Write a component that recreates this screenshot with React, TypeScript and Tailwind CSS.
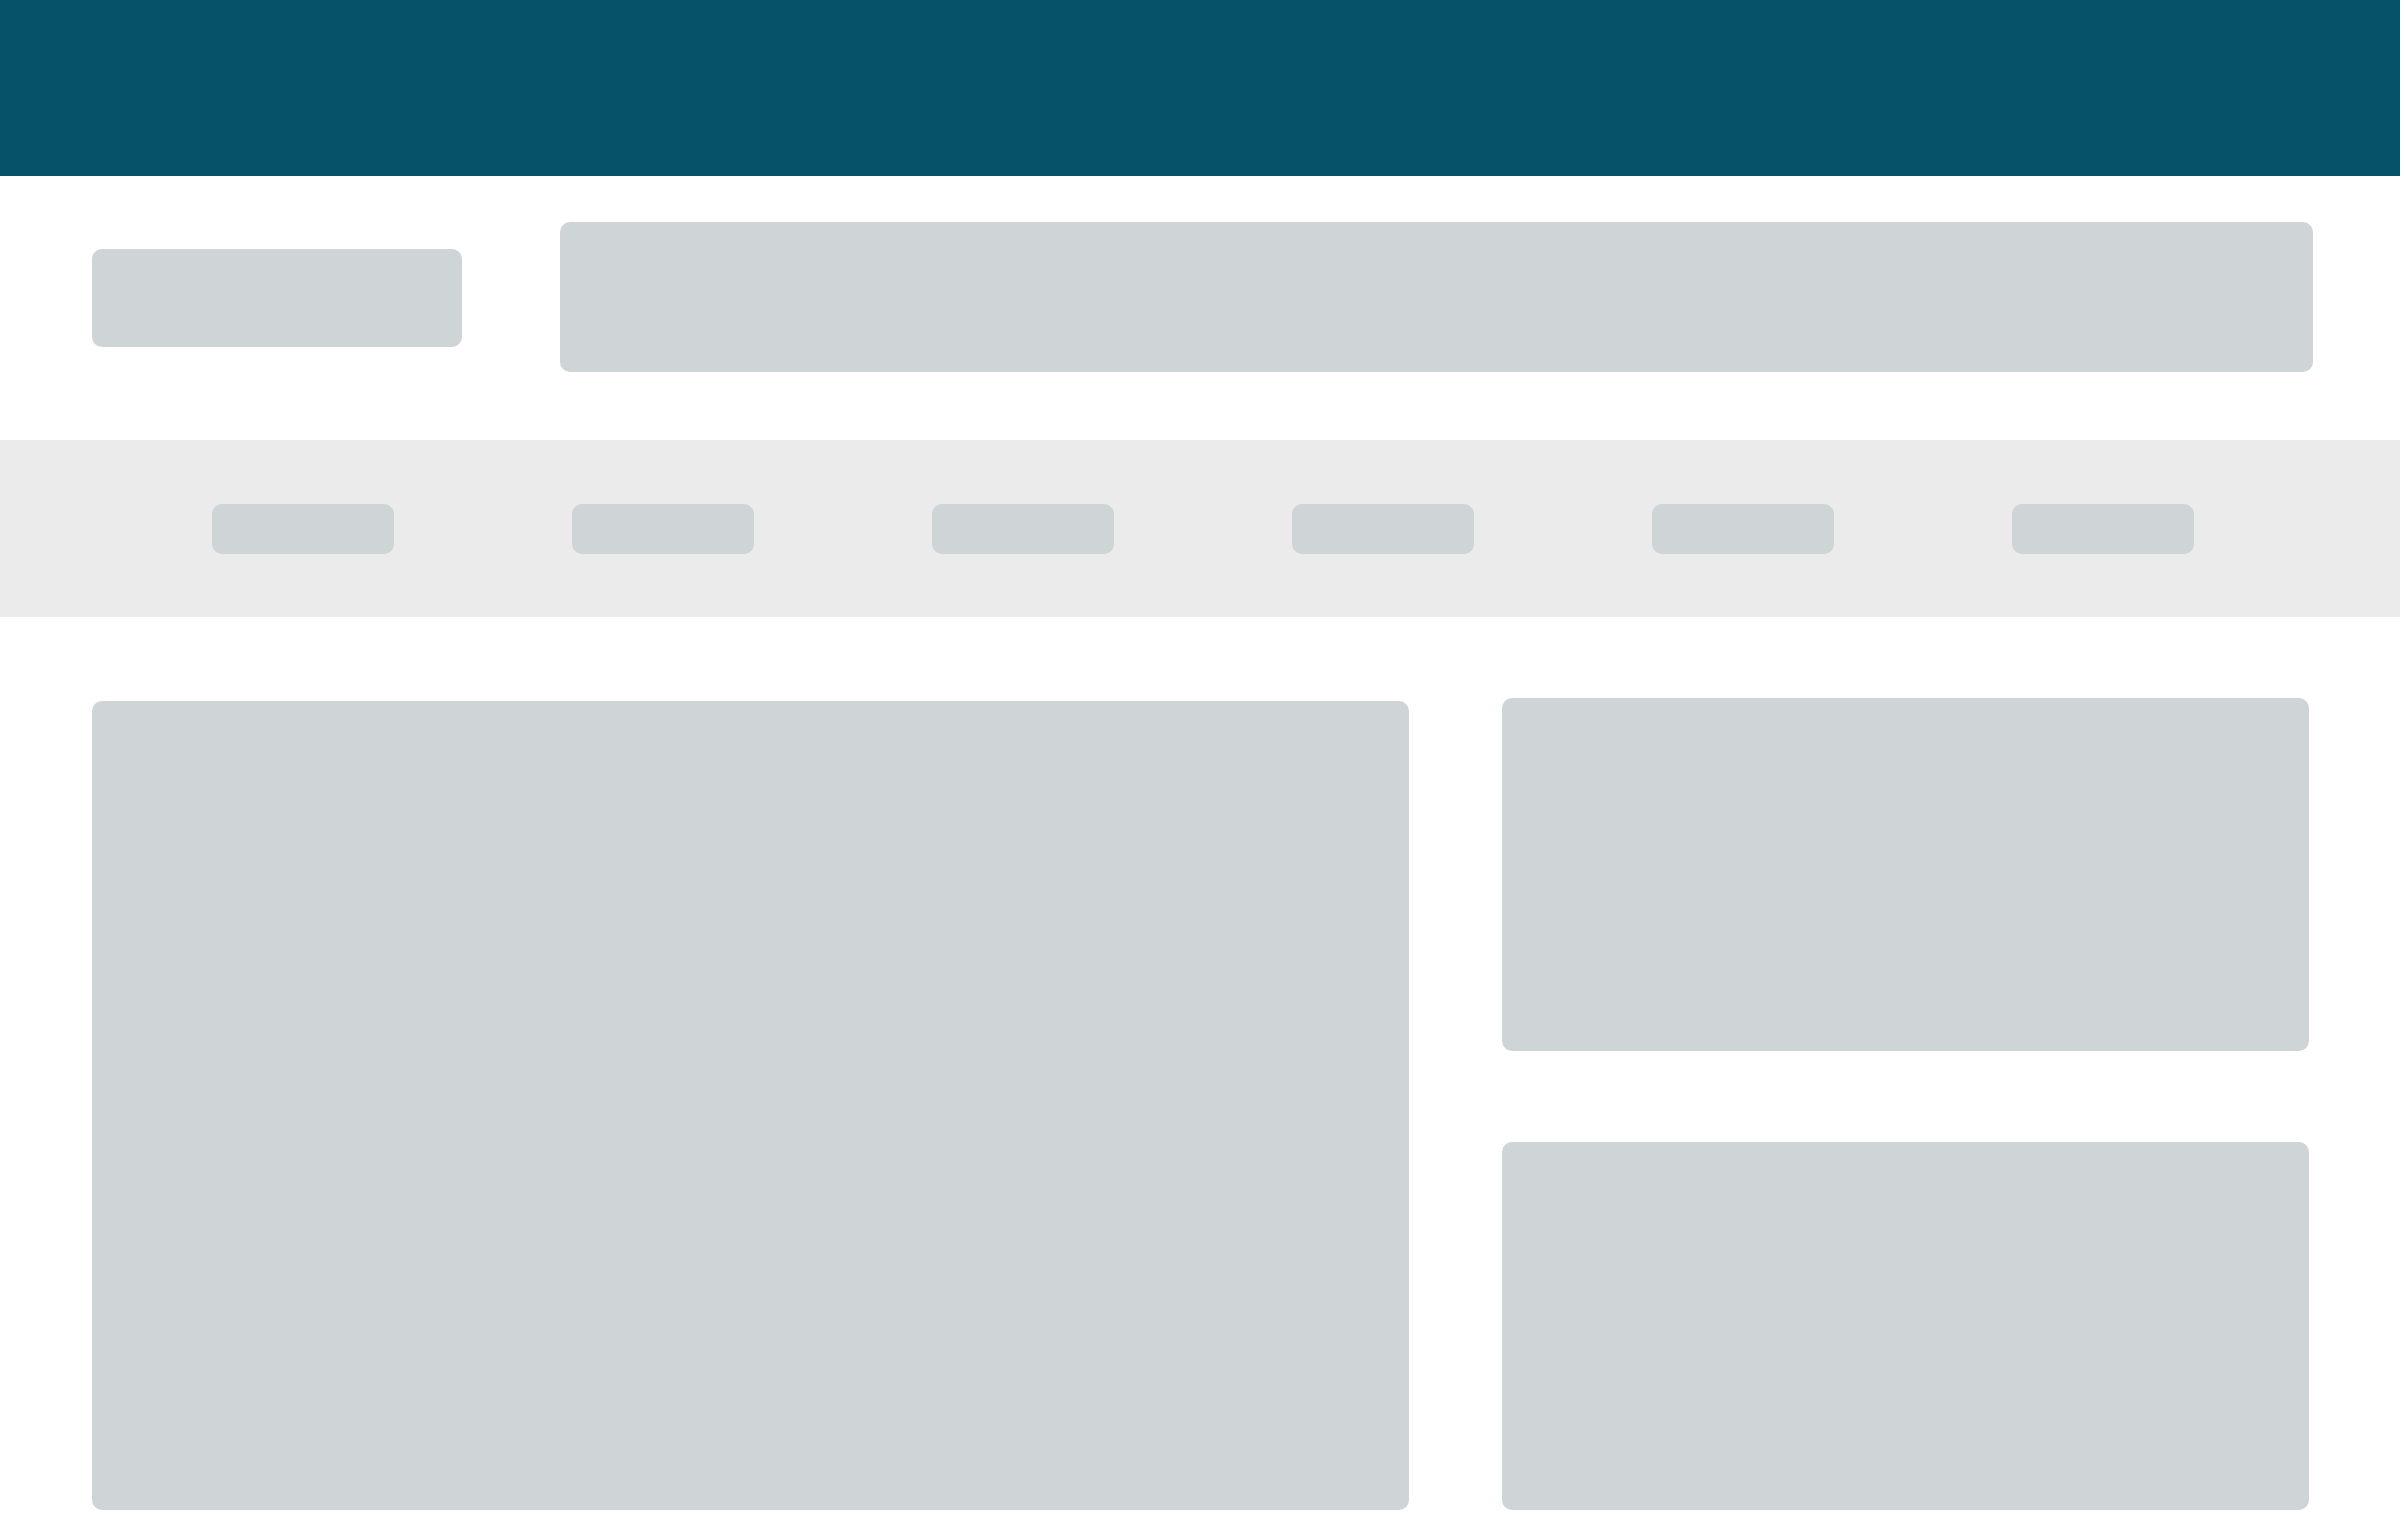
export default function App() {
  const pills = [0, 1, 2, 3, 4, 5];
  return (
    <div className="w-[2400px] h-[1518px] bg-white overflow-hidden">
      <header className="h-[176px] bg-[#065269]" />
      <div className="flex items-start pl-[92px] pr-[87px] pt-[46px] h-[264px]">
        <div className="mt-[27px] w-[370px] h-[98px] rounded-[10px] bg-[#cfd4d7] shrink-0" />
        <div className="ml-[98px] flex-1 h-[150px] rounded-[10px] bg-[#cfd4d7]" />
      </div>
      <nav className="h-[177px] bg-[#ebebeb] flex items-center pl-[212px] gap-[178px]">
        {pills.map((p) => (
          <div key={p} className="w-[182px] h-[50px] rounded-[10px] bg-[#cfd4d7]" />
        ))}
      </nav>
      <main className="flex pl-[92px] pt-[81px] gap-[93px]">
        <div className="mt-[3px] w-[1317px] h-[809px] rounded-[10px] bg-[#cfd4d7]" />
        <div className="flex flex-col gap-[91px] w-[807px]">
          <div className="h-[353px] rounded-[10px] bg-[#cfd4d7]" />
          <div className="h-[368px] rounded-[10px] bg-[#cfd4d7]" />
        </div>
      </main>
    </div>
  );
}
